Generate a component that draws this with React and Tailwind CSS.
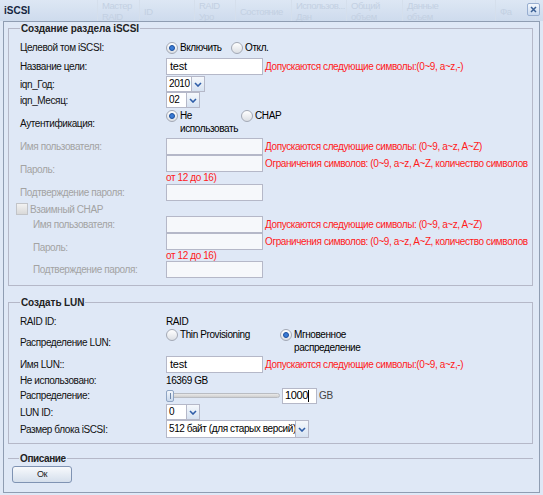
import React from 'react';

const FONT = "font-['Liberation_Sans',Arial,sans-serif]";

function Chevron() {
  return (
    <svg width="8" height="5" viewBox="0 0 8 5" className="block">
      <path d="M1 1 L4 4 L7 1" fill="none" stroke="#2f5ea8" strokeWidth="1.6" />
    </svg>
  );
}

function Radio({ checked }) {
  return (
    <span className="mt-[1px] flex h-[12px] w-[12px] shrink-0 items-center justify-center rounded-full border border-[#a3a9b5] bg-gradient-to-b from-white to-[#dcdfe4]">
      {checked && <span className="h-[6px] w-[6px] rounded-full border border-[#1c4f9c] bg-[#3a7bd5]" />}
    </span>
  );
}

function RadioItem({ checked, children, className = '' }) {
  return (
    <div className={`flex items-start gap-[2px] leading-[13px] ${className}`}>
      <Radio checked={checked} />
      <span>{children}</span>
    </div>
  );
}

function TextBox({ value = '', disabled, className = 'w-[97px]' }) {
  return (
    <div
      className={`h-[17px] shrink-0 overflow-hidden whitespace-nowrap border border-[#b5b8c8] px-[3px] text-[11px] leading-[15px] tracking-[-0.2px] ${
        disabled ? 'bg-[#f6f8fb]' : 'bg-white'
      } ${className}`}
    >
      {value}
    </div>
  );
}

function Combo({ value, width, tall }) {
  return (
    <div className={`flex ${tall ? 'h-[18px]' : 'h-[16px]'}`}>
      <div
        className={`${width} overflow-hidden whitespace-nowrap border border-[#b5b8c8] bg-white px-[2px] text-[10px] tracking-[-0.4px] ${
          tall ? 'leading-[16px]' : 'leading-[14px]'
        }`}
      >
        {value}
      </div>
      <div className="flex w-[13px] items-center justify-center border border-l-0 border-[#b5b8c8] bg-gradient-to-b from-[#f5f8fc] to-[#d6e2f1]">
        <Chevron />
      </div>
    </div>
  );
}

function Row({ label, h, disabled, indent, children }) {
  return (
    <div className={`flex items-center ${h}`}>
      <div
        className={`w-[146px] shrink-0 ${indent ? 'pl-[13px]' : ''} ${
          disabled ? 'text-[#a3a3a3]' : 'text-[#111]'
        }`}
      >
        {label}
      </div>
      <div className="flex min-w-0 flex-1 items-center">{children}</div>
    </div>
  );
}

function Hint({ children }) {
  return <span className="ml-[2px] whitespace-nowrap text-[#ff1a1a]">{children}</span>;
}

function PasswordRow({ indent }) {
  return (
    <div className="flex h-[28px] items-center">
      <div className={`w-[146px] shrink-0 text-[#a3a3a3] ${indent ? 'pl-[13px]' : ''}`}>Пароль:</div>
      <div className="flex flex-1 flex-col">
        <div className="flex h-[17px] items-center">
          <TextBox disabled />
          <Hint>Ограничения символов: (0~9, a~z, A~Z, количество символов</Hint>
        </div>
        <div className="h-[11px] leading-[11px] text-[#ff1a1a]">от 12 до 16)</div>
      </div>
    </div>
  );
}

function Legend({ children }) {
  return (
    <legend className="px-[1px] text-[10px] font-bold leading-[13px] tracking-[-0.1px] text-[#222]">{children}</legend>
  );
}

const GHOST = [
  { w: 'w-[98px]', a: '', b: '' },
  { w: 'w-[42px]', a: 'Мастер', b: 'RAID' },
  { w: 'w-[55px]', a: '', b: '', c: 'ID' },
  { w: 'w-[41px]', a: 'RAID', b: 'Уро' },
  { w: 'w-[56px]', a: '', b: '', c: 'Состояние' },
  { w: 'w-[55px]', a: 'Использов...', b: 'Дан' },
  { w: 'w-[56px]', a: 'Общий', b: 'объем' },
  { w: 'w-[93px]', a: 'Данные', b: 'объем' },
  { w: 'w-[40px]', a: '', b: '', c: 'Фа' },
];

export default function App() {
  return (
    <div className={`h-[495px] w-[543px] overflow-hidden bg-[#dfe8f6] text-[10px] tracking-[-0.4px] ${FONT}`}>
      {/* window header */}
      <div className="relative h-[21px] overflow-hidden bg-gradient-to-b from-[#dde7f4] to-[#cedbed]">
        <div className="flex h-full text-[9.5px] tracking-[-0.5px] text-[#c3d0e2]">
          {GHOST.map((g, i) => (
            <div key={i} className={`${g.w} shrink-0 whitespace-nowrap border-r border-[#d5dfec] pl-[4px]`}>
              {g.c ? (
                <div className="pt-[6px] leading-[12px]">{g.c}</div>
              ) : (
                <div className="leading-[11px]">
                  <div>{g.a}</div>
                  <div>{g.b}</div>
                </div>
              )}
            </div>
          ))}
        </div>
        <div className="absolute left-[4px] top-[4px] text-[10px] font-bold leading-[13px] tracking-normal text-[#15263f]">
          iSCSI
        </div>
        <div className="absolute left-[527px] top-[3px] flex h-[13px] w-[13px] items-center justify-center rounded-[2px] border border-[#98aed0] bg-gradient-to-b from-[#f4f8fd] to-[#c9d9ef]">
          <svg width="7" height="7" viewBox="0 0 7 7">
            <path d="M1 1 L6 6 M6 1 L1 6" stroke="#3a5f94" strokeWidth="1.5" />
          </svg>
        </div>
      </div>

      {/* window body */}
      <div className="mx-[3px] h-[472px] border border-[#8f9db2] pl-[4px] pr-[6px]">
        <fieldset className="h-[264px] border border-[#b5b8c8] pl-[11px] pt-[3px]">
          <Legend>Создание раздела iSCSI</Legend>
          <Row label="Целевой том iSCSI:" h="h-[18px]">
            <RadioItem checked className="w-[65px]">Включить</RadioItem>
            <RadioItem>Откл.</RadioItem>
          </Row>
          <Row label="Название цели:" h="h-[20px]">
            <TextBox value="test" />
            <Hint>Допускаются следующие символы:(0~9, a~z,-)</Hint>
          </Row>
          <Row label="iqn_Год:" h="h-[16px]">
            <Combo value="2010" width="w-[26px]" />
          </Row>
          <Row label="iqn_Месяц:" h="h-[16px]">
            <Combo value="02" width="w-[21px]" />
          </Row>
          <div className="flex h-[29px] items-center">
            <div className="w-[146px] shrink-0 pt-[2px] text-[#111]">Аутентификация:</div>
            <div className="flex flex-1 self-start pt-[1px]">
              <RadioItem checked className="w-[75px]">
                Не
                <br />
                использовать
              </RadioItem>
              <RadioItem>CHAP</RadioItem>
            </div>
          </div>
          <Row label="Имя пользователя:" h="h-[18px]" disabled>
            <TextBox disabled />
            <Hint>Допускаются следующие символы: (0~9, a~z, A~Z)</Hint>
          </Row>
          <PasswordRow />
          <Row label="Подтверждение пароля:" h="h-[19px]" disabled>
            <TextBox disabled />
          </Row>
          <div className="-ml-[4px] flex h-[14px] items-center gap-[2px] text-[#a3a3a3]">
            <span className="h-[12px] w-[12px] border border-[#c2c4c8] bg-gradient-to-b from-[#f2f2f2] to-[#d9d9d9]" />
            <span>Взаимный CHAP</span>
          </div>
          <Row label="Имя пользователя:" h="h-[17px]" disabled indent>
            <TextBox disabled />
            <Hint>Допускаются следующие символы: (0~9, a~z, A~Z)</Hint>
          </Row>
          <PasswordRow indent />
          <Row label="Подтверждение пароля:" h="h-[17px]" disabled indent>
            <TextBox disabled />
          </Row>
        </fieldset>

        <fieldset className="mt-[10px] h-[148px] border border-[#b5b8c8] pl-[11px] pt-[5px]">
          <Legend>Создать LUN</Legend>
          <Row label="RAID ID:" h="h-[14px]">
            <span>RAID</span>
          </Row>
          <div className="flex h-[27px] items-center">
            <div className="w-[146px] shrink-0 pt-[1px] text-[#111]">Распределение LUN:</div>
            <div className="flex flex-1 self-start">
              <RadioItem className="w-[114px]">Thin Provisioning</RadioItem>
              <RadioItem checked>
                Мгновенное
                <br />
                распределение
              </RadioItem>
            </div>
          </div>
          <Row label="Имя LUN::" h="h-[19px]">
            <TextBox value="test" />
            <Hint>Допускаются следующие символы:(0~9, a~z,-)</Hint>
          </Row>
          <Row label="Не использовано:" h="h-[13px]">
            <span>16369 GB</span>
          </Row>
          <Row label="Распределение:" h="h-[17px]">
            <div className="relative flex h-[12px] w-[116px] items-center">
              <div className="h-[5px] w-[114px] rounded-full border border-[#b9bcc2] bg-gradient-to-b from-[#e9e9e9] to-[#cfcfcf]" />
              <div className="absolute left-0 top-0 flex h-[12px] w-[8px] items-center justify-center rounded-[2px] border border-[#8fa5c4] bg-gradient-to-b from-[#f3f7fc] to-[#c9d8ec]">
                <span className="h-[6px] w-[1px] bg-[#6e86a8]" />
              </div>
            </div>
            <div className="flex h-[16px] w-[35px] items-center border border-[#b5b8c8] bg-white px-[2px] text-[11px]">
              1000<span className="h-[12px] w-[1px] bg-black" />
            </div>
            <span className="ml-[2px] text-[#444]">GB</span>
          </Row>
          <Row label="LUN ID:" h="h-[16px]">
            <Combo value="0" width="w-[21px]" />
          </Row>
          <Row label="Размер блока iSCSI:" h="h-[18px]">
            <Combo value="512 байт (для старых версий)" width="w-[130px]" tall />
          </Row>
        </fieldset>

        <fieldset className="mt-[8px] border-x-0 border-b-0 border-t border-[#b5b8c8] pl-[4px]">
          <legend className="ml-[7px] px-[1px] text-[10px] font-bold leading-[13px] text-[#222]">Описание</legend>
          <button className="mt-[1px] flex h-[17px] w-[60px] items-center justify-center rounded-[3px] border border-[#7f93b3] bg-gradient-to-b from-[#f7f9fc] to-[#d5dfec] text-[9px] text-[#222]">
            Ок
          </button>
        </fieldset>
      </div>
    </div>
  );
}
